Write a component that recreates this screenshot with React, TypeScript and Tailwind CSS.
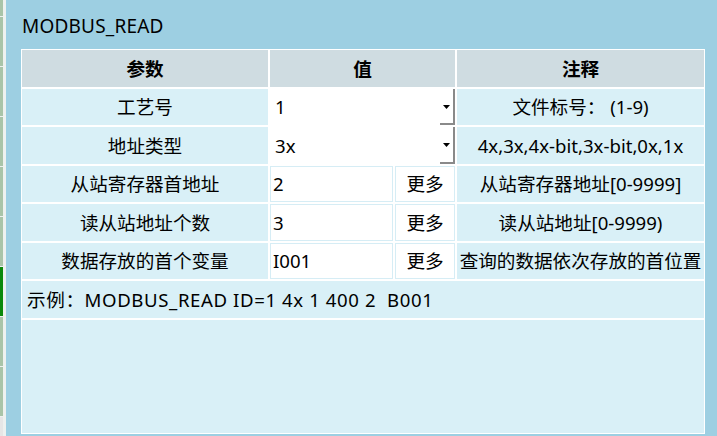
import React from "react";

const font = { fontFamily: '"Noto Sans", "Noto Sans CJK SC", sans-serif' };

function Strip() {
  const blocks = [16, 49, 49, 49, 49, 49, 49, 49, 49];
  return (
    <div className="flex h-full w-[6px] shrink-0 bg-[#eef1ef]">
      <div className="flex w-[3px] flex-col gap-[1px] bg-[#eef1ef]">
        {blocks.map((h, i) => (
          <div
            key={i}
            className={i === 6 ? "shrink-0 bg-[#0b890b]" : "shrink-0 bg-[#a9c4a8]"}
            style={{ height: h }}
          />
        ))}
        <div className="flex-1 bg-[#e6e6e6]" />
      </div>
    </div>
  );
}

function Arrow() {
  return (
    <svg width="7" height="4" viewBox="0 0 7 4" className="absolute right-[5px] top-[16px]">
      <polygon points="0,0 7,0 3.5,4" fill="#000" />
    </svg>
  );
}

function SelectCell({ value }: { value: string }) {
  return (
    <div className="relative col-span-2 flex items-center bg-white pl-[5px]">
      <span>{value}</span>
      <Arrow />
      <div className="absolute right-0 top-0 h-full w-[2px] bg-[#8a8a8a]" />
      <div className="absolute bottom-0 right-0 h-[2px] w-[15px] bg-[#8a8a8a]" />
    </div>
  );
}

function Row({
  label,
  note,
  children,
}: {
  label: string;
  note: string;
  children: React.ReactNode;
}) {
  return (
    <>
      <div className="flex items-center justify-center bg-[#d9f0f7]">{label}</div>
      {children}
      <div className="flex items-center justify-center overflow-visible whitespace-nowrap bg-[#d9f0f7]">
        {note}
      </div>
    </>
  );
}

function InputMore({ value }: { value: string }) {
  return (
    <>
      <div className="flex items-center border border-[#d6edf5] bg-white pl-[2px]">{value}</div>
      <div className="flex items-center justify-center border border-[#d6edf5] bg-white">更多</div>
    </>
  );
}

export default function App() {
  return (
    <div className="flex h-[436px] w-[717px] overflow-hidden text-black" style={font}>
      <Strip />
      <div className="flex flex-1 flex-col bg-[#9dcfe2] pl-[15px]">
        <div className="flex h-[49px] items-center pl-[1px] pt-[3px] text-[19px] tracking-[0.2px]">MODBUS_READ</div>
        <div className="grid h-[385px] w-[684px] grid-cols-[246px_123px_60px_247px] grid-rows-[37px_36px_37px_36px_37px_36px_37px_1fr] gap-[2px] border border-white bg-white text-[18.6px]">
          <div className="flex items-center justify-center bg-[#cfdce1] font-bold">参数</div>
          <div className="col-span-2 flex items-center justify-center bg-[#cfdce1] font-bold">值</div>
          <div className="flex items-center justify-center bg-[#cfdce1] font-bold">注释</div>

          <Row label="工艺号" note="文件标号： (1-9)">
            <SelectCell value="1" />
          </Row>
          <Row label="地址类型" note="4x,3x,4x-bit,3x-bit,0x,1x">
            <SelectCell value="3x" />
          </Row>
          <Row label="从站寄存器首地址" note="从站寄存器地址[0-9999]">
            <InputMore value="2" />
          </Row>
          <Row label="读从站地址个数" note="读从站地址[0-9999)">
            <InputMore value="3" />
          </Row>
          <Row label="数据存放的首个变量" note="查询的数据依次存放的首位置">
            <InputMore value="I001" />
          </Row>

          <div className="col-span-4 flex items-center whitespace-pre bg-[#d9f0f7] pl-[5px] tracking-[0.6px]">
            示例：MODBUS_READ ID=1 4x 1 400 2  B001
          </div>
          <div className="col-span-4 bg-[#d9f0f7]" />
        </div>
      </div>
    </div>
  );
}
